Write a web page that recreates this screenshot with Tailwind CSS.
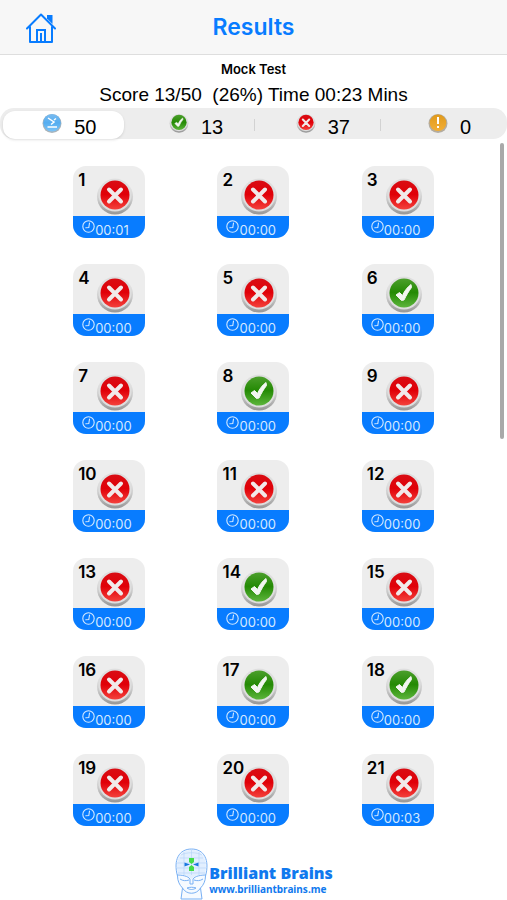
<!DOCTYPE html>
<html lang="en">
<head>
    <meta charset="UTF-8">
    <meta name="viewport" content="width=device-width, initial-scale=1.0">
    <title>Results</title>
    <script src="https://cdn.jsdelivr.net/npm/@tailwindcss/browser@4"></script>
</head>
<body class="flex min-h-screen flex-col bg-white font-[Inter,sans-serif] text-black">
    <!-- Shared icons -->
    <svg class="absolute size-0" aria-hidden="true">
        <defs>
            <linearGradient id="ring" x1="0" y1="0" x2="0" y2="1">
                <stop offset="0" stop-color="#f4f4f4"/>
                <stop offset=".55" stop-color="#cfcfcf"/>
                <stop offset="1" stop-color="#969696"/>
            </linearGradient>
            <linearGradient id="red" x1="0" y1="0" x2="0" y2="1">
                <stop offset="0" stop-color="#d90d14"/>
                <stop offset=".48" stop-color="#e00008"/>
                <stop offset="1" stop-color="#f4413c"/>
            </linearGradient>
            <linearGradient id="green" x1="0" y1="0" x2="0" y2="1">
                <stop offset="0" stop-color="#4c9f2c"/>
                <stop offset=".48" stop-color="#248a04"/>
                <stop offset="1" stop-color="#5db53c"/>
            </linearGradient>
            <linearGradient id="blue" x1="0" y1="0" x2="0" y2="1">
                <stop offset="0" stop-color="#7bbcf0"/>
                <stop offset=".5" stop-color="#55adf0"/>
                <stop offset="1" stop-color="#7cc4f7"/>
            </linearGradient>
            <linearGradient id="amber" x1="0" y1="0" x2="0" y2="1">
                <stop offset="0" stop-color="#e09a1c"/>
                <stop offset="1" stop-color="#f3ae35"/>
            </linearGradient>
        </defs>
        <symbol id="wrong" viewBox="0 0 38 38">
            <circle cx="19" cy="19.500" r="18" fill="url(#ring)"/>
            <circle cx="19" cy="18" r="16.500" fill="#dedede"/>
            <circle cx="19" cy="18" r="14.500" fill="url(#red)"/>
            <path d="M13 12.500l12 12M25 12.500l-12 12" stroke="#f1e9e9" stroke-width="4" stroke-linecap="round"/>
        </symbol>
        <symbol id="right" viewBox="0 0 38 38">
            <circle cx="19" cy="19.500" r="18" fill="url(#ring)"/>
            <circle cx="19" cy="18" r="16.500" fill="#dedede"/>
            <circle cx="19" cy="18" r="14.500" fill="url(#green)"/>
            <path d="M11 20l3.500-2.500 3 3c2-4.500 4.500-8 8.500-11l.5 3c-3 4-5 7.500-7.500 12.500l-2.500.5z" fill="#f2f6f0" stroke="#f2f6f0" stroke-linejoin="round"/>
        </symbol>
        <symbol id="clock" viewBox="0 0 13 13">
            <g fill="none" stroke="currentColor" stroke-width="1.100" stroke-linecap="round">
                <circle cx="6.500" cy="6.500" r="5.700"/>
                <path d="M7.500 3l-.7 4.500-3 .3"/>
            </g>
        </symbol>
    </svg>

    <header class="grid h-[55px] shrink-0 grid-cols-[1fr_auto_1fr] items-center border-b border-[#dedede] bg-[#f7f7f7] px-[26px]">
        <a href="#" aria-label="Home" class="w-[30px] text-[#087cff]">
            <svg class="mt-0.5 size-[30px]" viewBox="0 0 30 30" fill="none" stroke="currentColor" stroke-width="2">
                <path d="M1 15.500L15 1.500l14 14M4 14v15h22V14" stroke-linejoin="round" stroke-linecap="round"/>
                <path d="M11 29V17h8v12M15 29v-9"/>
                <path d="M21 2h5.500v9L21 5.500z" fill="currentColor" stroke="none"/>
            </svg>
        </a>
        <h1 class="text-[23px] leading-8 font-semibold text-[#087cff]">Results</h1>
    </header>

    <section class="text-center">
        <h2 class="pt-1 text-[13px] leading-5 font-semibold">Mock Test</h2>
        <p class="pt-1 font-['Liberation_Sans',sans-serif] text-[19px] leading-6 whitespace-pre">Score 13/50  (26%) Time 00:23 Mins</p>
    </section>

    <nav aria-label="Filter answers" class="mt-px grid h-[31px] shrink-0 grid-cols-4 rounded-[14px] bg-[#ededed] font-['Liberation_Sans',sans-serif] text-xl leading-6">
        <button aria-pressed="true" class="m-[3px] flex items-center justify-center gap-3 rounded-xl bg-white pl-3 shadow">
            <svg class="-mt-1 size-5" viewBox="0 0 20 20">
                <circle cx="10" cy="10.500" r="9.500" fill="#aab3b9"/>
                <circle cx="10" cy="9.800" r="8.800" fill="url(#blue)"/>
                <path d="M6 5l6 4-3 2.500M14 5.500l-2 1.500M5.500 14h9.500" fill="none" stroke="#fff" stroke-width="1.500"/>
            </svg>
            <span class="pt-1">50</span>
        </button>
        <button aria-pressed="false" class="flex items-center justify-center gap-3 pl-3">
            <svg class="-mt-1 size-5"><use href="#right"/></svg>
            <span class="pt-1">13</span>
        </button>
        <button aria-pressed="false" class="relative flex items-center justify-center gap-3 pl-3 before:absolute before:left-0 before:h-3 before:w-px before:bg-[#d2d2d2]">
            <svg class="-mt-1 size-5"><use href="#wrong"/></svg>
            <span class="pt-1">37</span>
        </button>
        <button aria-pressed="false" class="relative flex items-center justify-center gap-3 pl-3 before:absolute before:left-0 before:h-3 before:w-px before:bg-[#d2d2d2]">
            <svg class="-mt-1 size-5" viewBox="0 0 20 20">
                <circle cx="10" cy="10.500" r="9.500" fill="#b3aca0"/>
                <circle cx="10" cy="9.800" r="8.300" fill="url(#amber)"/>
                <path d="M10 4v7M10 13v2" stroke="#fff" stroke-width="2"/>
            </svg>
            <span class="pt-1">0</span>
        </button>
    </nav>

    <main class="relative px-[37px] pt-[27px]">
        <div id="answers" class="grid grid-cols-3 justify-items-center gap-y-[26px]"></div>
        <div class="absolute top-1 right-[3px] h-[296px] w-1 rounded-full bg-[#a9a9a9]"></div>
    </main>

    <footer class="flex justify-center pt-[22px]">
        <a href="#" class="flex items-center text-[#1079ee]">
            <svg class="h-[52px] w-[35px]" viewBox="0 0 35 52" fill="none" stroke="#78b0f4" stroke-width="1">
                <path d="M3.500 28C-1 12 5 1 17.500 1S36 12 31.500 28c0 5-2 9-5 12l1.500 11H7l1.500-11c-3-3-5-7-5-12z" fill="#f6faff"/>
                <path d="M4 26C1 12 6 2 17.500 2S34 12 31 26c-5 0-11 2-13.500 5C15 28 9 26 4 26z" fill="#e2efff" stroke="none"/>
                <path d="M6 10h23M3 15h29M3 20h29M4 25h27M10 4v23M17.500 1v26M25 4v23M7 7c5-3 16-3 21 0" stroke="#b8d5f8" stroke-width=".7"/>
                <path d="M3 27c5 0 11 1 13 4v5h3v-5c2-3 8-4 13-4M6 31c3 2 6 2 9 1M29 31c-3 2-6 2-9 1M13 40c3-1 6-1 9 0-3 2-6 2-9 0M8.500 40c4 7 14 7 18 0"/>
                <g stroke="none">
                    <path d="M15 10h5v4l-2.500 2L15 14zM15 23h5v-4l-2.500-2L15 19z" fill="#43dc49"/>
                    <path d="M10.500 14.500l5.500 2-5.500 2zM24.500 14.500l-5.500 2 5.500 2z" fill="#1976df"/>
                </g>
            </svg>
            <span class="flex flex-col pt-2.5 font-['Open_Sans',sans-serif] font-extrabold">
                <span class="text-base leading-5">Brilliant Brains</span>
                <span class="font-['Noto_Sans',sans-serif] text-[10px] leading-3 font-bold">www.brilliantbrains.me</span>
            </span>
        </a>
    </footer>

    <script>
        const correct = [6, 8, 14, 17, 18];
        const times = { 1: '00:01', 21: '00:03' };
        const answers = document.getElementById('answers');

        for (let n = 1; n <= 21; n++) {
            const icon = correct.includes(n) ? 'right' : 'wrong';
            answers.innerHTML += `
                <button aria-label="Question ${n}, ${icon}" class="flex h-[72px] w-[72px] flex-col overflow-hidden rounded-[13px] bg-[#ededed]">
                    <span class="relative h-[50px] w-full shrink-0 text-left">
                        <span class="absolute top-1 left-[5px] text-[17px] leading-5 font-semibold">${n}</span>
                        <svg class="absolute top-[11px] right-[11px] size-[38px]"><use href="#${icon}"/></svg>
                    </span>
                    <span class="flex h-[22px] w-full items-start bg-[#087cff] pl-[9px] text-[#d5e9ff]">
                        <svg class="mt-1 size-[13px]"><use href="#clock"/></svg>
                        <span class="pt-1 text-[13px] leading-5">${times[n] || '00:00'}</span>
                    </span>
                </button>`;
        }
    </script>
</body>
</html>
